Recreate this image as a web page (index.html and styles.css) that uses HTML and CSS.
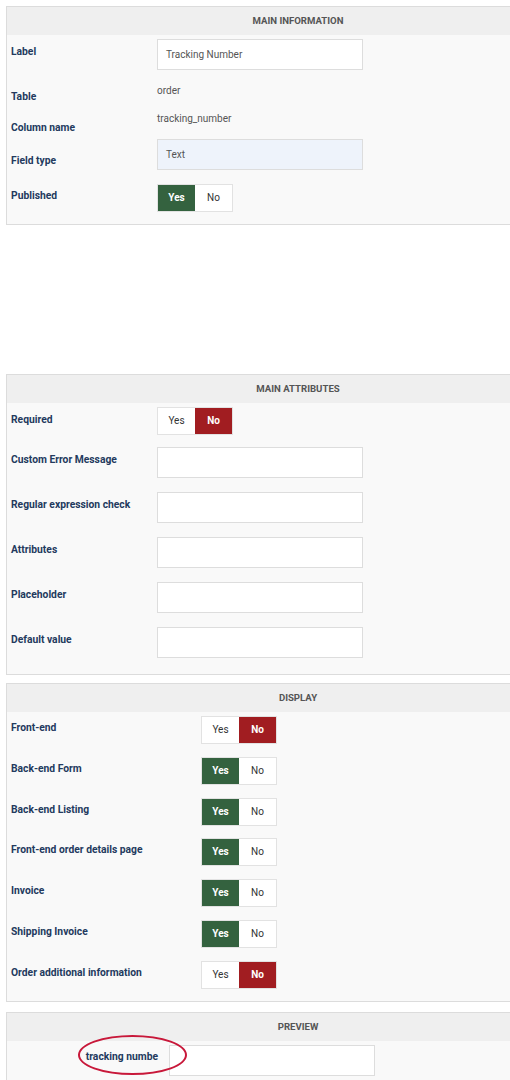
FILE: index.html
```html
<!DOCTYPE html>
<html>
<head>
<meta charset="utf-8">
<link rel="stylesheet" href="styles.css">
</head>
<body>
<div class="page">
  <section class="panel info">
    <div class="panel-head">MAIN INFORMATION</div>
    <div class="panel-body">
      <div class="row r-label">
        <div class="key">Label</div>
        <div class="val"><div class="input">Tracking Number</div></div>
      </div>
      <div class="row r-table">
        <div class="key">Table</div>
        <div class="val text">order</div>
      </div>
      <div class="row r-column">
        <div class="key">Column name</div>
        <div class="val text">tracking_number</div>
      </div>
      <div class="row r-type">
        <div class="key">Field type</div>
        <div class="val"><div class="input select">Text</div></div>
      </div>
      <div class="row r-pub">
        <div class="key">Published</div>
        <div class="val"><div class="toggle"><span class="opt yes on">Yes</span><span class="opt">No</span></div></div>
      </div>
    </div>
  </section>

  <section class="panel attr">
    <div class="panel-head">MAIN ATTRIBUTES</div>
    <div class="panel-body">
      <div class="row first">
        <div class="key">Required</div>
        <div class="val"><div class="toggle"><span class="opt">Yes</span><span class="opt no on">No</span></div></div>
      </div>
      <div class="row">
        <div class="key">Custom Error Message</div>
        <div class="val"><div class="input"></div></div>
      </div>
      <div class="row">
        <div class="key">Regular expression check</div>
        <div class="val"><div class="input"></div></div>
      </div>
      <div class="row">
        <div class="key">Attributes</div>
        <div class="val"><div class="input"></div></div>
      </div>
      <div class="row">
        <div class="key">Placeholder</div>
        <div class="val"><div class="input"></div></div>
      </div>
      <div class="row">
        <div class="key">Default value</div>
        <div class="val"><div class="input"></div></div>
      </div>
    </div>
  </section>

  <section class="panel disp">
    <div class="panel-head">DISPLAY</div>
    <div class="panel-body">
      <div class="row">
        <div class="key">Front-end</div>
        <div class="val"><div class="toggle"><span class="opt">Yes</span><span class="opt no on">No</span></div></div>
      </div>
      <div class="row">
        <div class="key">Back-end Form</div>
        <div class="val"><div class="toggle"><span class="opt yes on">Yes</span><span class="opt">No</span></div></div>
      </div>
      <div class="row">
        <div class="key">Back-end Listing</div>
        <div class="val"><div class="toggle"><span class="opt yes on">Yes</span><span class="opt">No</span></div></div>
      </div>
      <div class="row">
        <div class="key">Front-end order details page</div>
        <div class="val"><div class="toggle"><span class="opt yes on">Yes</span><span class="opt">No</span></div></div>
      </div>
      <div class="row">
        <div class="key">Invoice</div>
        <div class="val"><div class="toggle"><span class="opt yes on">Yes</span><span class="opt">No</span></div></div>
      </div>
      <div class="row">
        <div class="key">Shipping Invoice</div>
        <div class="val"><div class="toggle"><span class="opt yes on">Yes</span><span class="opt">No</span></div></div>
      </div>
      <div class="row">
        <div class="key">Order additional information</div>
        <div class="val"><div class="toggle"><span class="opt">Yes</span><span class="opt no on">No</span></div></div>
      </div>
    </div>
  </section>

  <section class="panel preview">
    <div class="panel-head">PREVIEW</div>
    <div class="panel-body">
      <div class="row">
        <div class="key">tracking numbe</div>
        <div class="val"><div class="input"></div></div>
      </div>
    </div>
    <div class="mark"></div>
  </section>
</div>
</body>
</html>
```

FILE: styles.css
```css
html, body {
  margin: 0;
  padding: 0;
  background: #ffffff;
  overflow: hidden;
}

.page {
  width: 510px;
  height: 1080px;
  overflow: hidden;
  padding: 6px 0 0 6px;
  box-sizing: border-box;
  font-family: Roboto, "Liberation Sans", sans-serif;
}

.panel {
  position: relative;
  width: 584px;
  border: 1px solid #dcdcdc;
  background: #f9f9f9;
  box-sizing: border-box;
}

.panel-head {
  height: 28px;
  line-height: 28px;
  background: #efefef;
  text-align: center;
  font-size: 9.6px;
  font-weight: 700;
  color: #555555;
}

.row {
  display: flex;
  align-items: flex-start;
}

.key {
  flex: 0 0 150px;
  box-sizing: border-box;
  padding-left: 4px;
  font-size: 10.3px;
  line-height: 14px;
  font-weight: 700;
  color: #233a5e;
}

.val {
  flex: 0 0 auto;
}

.text {
  font-size: 10px;
  line-height: 14px;
  color: #555555;
}

.input {
  width: 206px;
  height: 31px;
  box-sizing: border-box;
  border: 1px solid #dddddd;
  background: #ffffff;
  padding-left: 8px;
  font-size: 10px;
  line-height: 29px;
  color: #555555;
}

.input.select {
  background: #eef3fb;
}

.toggle {
  display: flex;
  height: 28px;
  box-sizing: border-box;
  border: 1px solid #e2e2e2;
  background: #ffffff;
}

.opt {
  width: 37px;
  text-align: center;
  font-size: 10px;
  line-height: 26px;
  color: #333333;
}

.opt.on {
  color: #ffffff;
  font-weight: 700;
}

.opt.yes.on {
  background: #34623f;
}

.opt.no.on {
  background: #a11d21;
}

/* main information */
.info .panel-body { padding-bottom: 4px; }
.r-label { height: 45px; }
.r-label .key { padding-top: 10px; }
.r-label .val { padding-top: 4px; }
.r-table { height: 28px; }
.r-table .key { padding-top: 10px; }
.r-table .val { padding-top: 4px; }
.r-column { height: 29px; }
.r-column .key { padding-top: 13px; }
.r-column .val { padding-top: 4px; }
.r-type { height: 42px; }
.r-type .key { padding-top: 17px; }
.r-type .val { padding-top: 2px; }
.r-pub { height: 41px; }
.r-pub .key { padding-top: 10px; }
.r-pub .val { padding-top: 5px; }

/* main attributes */
.attr { margin-top: 149px; }
.attr .panel-body { padding-bottom: 6px; }
.attr .row { height: 45px; }
.attr .row.first { height: 40px; }
.attr .key { padding-top: 10px; }
.attr .val { padding-top: 4px; }

/* display */
.disp { margin-top: 8px; }
.disp .panel-body { padding-bottom: 3px; }
.disp .row { height: 40.8px; }
.disp .key { flex-basis: 194px; padding-top: 9px; }
.disp .val { padding-top: 4px; }

/* preview */
.preview { margin-top: 10px; }
.preview .row { height: 40px; }
.preview .key {
  flex-basis: 162px;
  text-align: right;
  padding-right: 11px;
  padding-top: 9px;
}
.preview .val { padding-top: 4px; }

.mark {
  position: absolute;
  left: 71px;
  top: 22px;
  width: 109px;
  height: 40px;
  box-sizing: border-box;
  border: 2px solid #c8183a;
  border-radius: 50%;
}
```
